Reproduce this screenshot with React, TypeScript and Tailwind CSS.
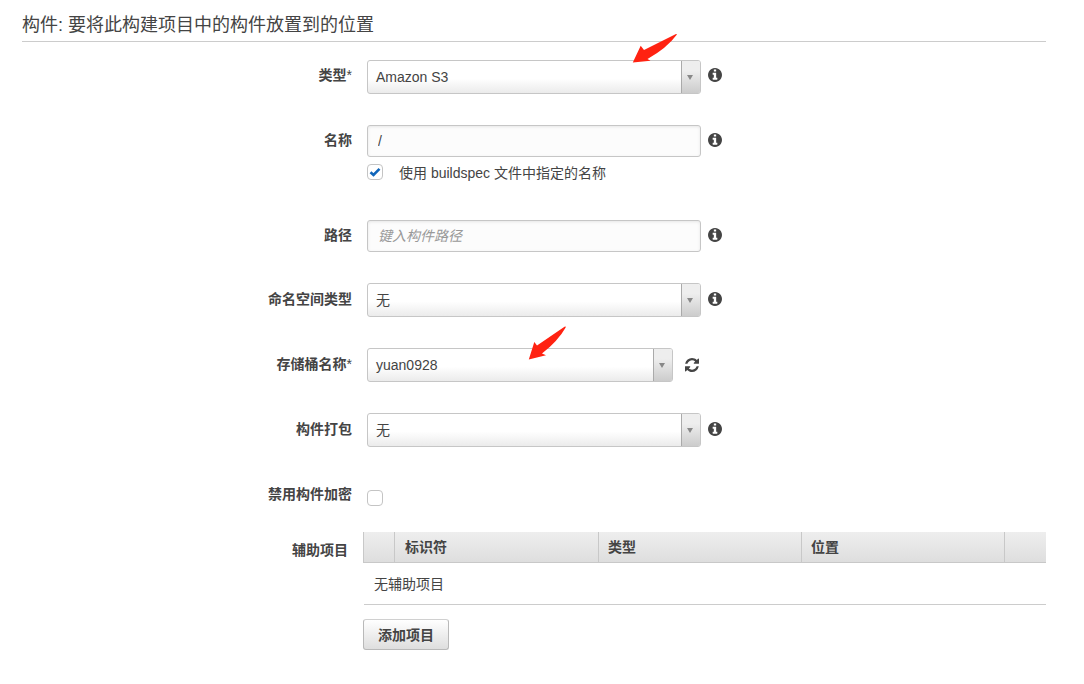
import type { ReactNode } from "react";

function InfoIcon({ className = "mt-2" }: { className?: string }) {
  return (
    <svg viewBox="0 128 1536 1536" className={"ml-[7px] h-3.5 w-3.5 shrink-0 fill-[#444] " + className}>
      <path d="M1024 1376v-160q0-14-9-23t-23-9h-96v-512q0-14-9-23t-23-9h-320q-14 0-23 9t-9 23v160q0 14 9 23t23 9h96v320h-96q-14 0-23 9t-9 23v160q0 14 9 23t23 9h448q14 0 23-9t9-23zm-128-896v-160q0-14-9-23t-23-9h-192q-14 0-23 9t-9 23v160q0 14 9 23t23 9h192q14 0 23-9t9-23zm640 416q0 209-103 385.500t-279.500 279.500-385.500 103-385.500-103-279.500-279.500-103-385.500 103-385.500 279.500-279.500 385.500-103 385.500 103 279.500 279.500 103 385.500z" />
    </svg>
  );
}

function RefreshIcon() {
  return (
    <svg viewBox="128 128 1536 1536" className="ml-3 mt-2.5 h-3.5 w-3.5 shrink-0 fill-[#444]">
      <path d="M1639 1056q0 5-1 7-64 268-268 434.500t-478 166.500q-146 0-282.500-55t-243.500-157l-129 129q-19 19-45 19t-45-19-19-45v-448q0-26 19-45t45-19h448q26 0 45 19t19 45-19 45l-137 137q71 66 161 102t187 36q134 0 250-65t186-179q11-17 53-117 8-23 30-23h192q13 0 22.500 9.500t9.500 22.500zm25-800v448q0 26-19 45t-45 19h-448q-26 0-45-19t-19-45 19-45l138-138q-148-137-349-137-134 0-250 65t-186 179q-11 17-53 117-8 23-30 23h-199q-13 0-22.500-9.500t-9.500-22.500v-7q65-268 270-434.500t480-166.500q146 0 284 55.500t245 156.500l130-129q19-19 45-19t45 19 19 45z" />
    </svg>
  );
}

function Pointer({ path, className }: { path: string; className: string }) {
  return (
    <svg viewBox="0 0 46 36" className={"absolute h-9 w-[46px] fill-[#ff2211] " + className}>
      <path d={path} />
    </svg>
  );
}

type RowProps = { label: string; required?: boolean; className: string; labelClass?: string; children: ReactNode };

function Row({ label, required = false, className, labelClass = "mt-[5px]", children }: RowProps) {
  return (
    <div className={"flex items-start " + className}>
      <div className={"mr-[15px] w-[330px] text-right font-bold leading-5 " + labelClass}>
        {label}
        {required && <span className="font-normal">*</span>}
      </div>
      {children}
    </div>
  );
}

function Select({ value, width = "w-[334px]", children }: { value: string; width?: string; children?: ReactNode }) {
  return (
    <div className={"relative flex h-[34px] rounded-[3px] border border-[#c6c6c6] bg-linear-to-b from-white from-55% to-[#ebebeb] " + width}>
      <span className="flex-1 pl-2 leading-[33px]">{value}</span>
      <span className="flex w-[19px] items-center justify-center rounded-r-[2px] border-l border-[#aaa] bg-linear-to-b from-[#eee] from-30% to-[#ccc] pr-0.5">
        <svg viewBox="0 0 6 5" className="h-[5px] w-1.5 fill-[#888]">
          <path d="M0 0H6L3 5Z" />
        </svg>
      </span>
      {children}
    </div>
  );
}

function TextField({ value, placeholder }: { value?: string; placeholder?: string }) {
  return (
    <input
      defaultValue={value}
      placeholder={placeholder}
      className="block h-8 w-[334px] rounded-[3px] border border-[#c6c6c6] bg-[#fcfcfc] px-2.5 text-sm shadow-[inset_0_1px_3px_#e6e6e6] outline-none placeholder:italic placeholder:text-[#999] placeholder:opacity-100"
    />
  );
}

function Checkbox({ checked = false }: { checked?: boolean }) {
  return (
    <span className="flex h-4 w-4 shrink-0 items-center justify-center rounded-[4px] border border-[#c4c4c4] bg-white">
      {checked && (
        <svg viewBox="0 0 12 10" className="h-2.5 w-3 fill-none stroke-[#1166bb] stroke-[2.600]">
          <path d="M1.500 5.200 L4.500 8 L10.500 1.800" />
        </svg>
      )}
    </span>
  );
}

export default function App() {
  return (
    <main className="h-[684px] w-[1084px] bg-white pl-[22px] pr-[38px] font-['Liberation_Sans','Noto_Sans_CJK_SC',sans-serif] text-sm text-[#444]">
      <h2 className="h-[42px] border-b border-[#ccc] pt-[13px] text-lg leading-6">构件: 要将此构建项目中的构件放置到的位置</h2>

      <Row label="类型" required className="mt-[18px] h-[65px]">
        <Select value="Amazon S3">
          <Pointer
            className="-top-[29px] left-[264px]"
            path="M0.800 30.500 L8.700 13.700 L12 18 L44 2 Q45.500 1.700 44.500 3 Q35 16 15.500 27 L18.500 28.700 Z"
          />
        </Select>
        <InfoIcon />
      </Row>
      <Row label="名称" className="h-[95px]">
        <div>
          <TextField value="/" />
          <div className="mt-[7px] flex">
            <Checkbox checked />
            <span className="ml-4 leading-[18px]">使用 buildspec 文件中指定的名称</span>
          </div>
        </div>
        <InfoIcon />
      </Row>
      <Row label="路径" className="h-[63px]">
        <TextField placeholder="键入构件路径" />
        <InfoIcon />
      </Row>
      <Row label="命名空间类型" className="h-[65px]" labelClass="mt-1.5">
        <Select value="无" />
        <InfoIcon className="mt-[9px]" />
      </Row>
      <Row label="存储桶名称" required className="h-[65px]" labelClass="mt-1.5">
        <Select value="yuan0928" width="w-[306px]">
          <Pointer
            className="-top-[24px] left-[160px]"
            path="M0.800 34.500 L6.300 17 L9 20.500 L36.500 1.700 Q38.500 1.200 37.500 2.700 Q30 16 14 28.500 L18 30.200 Z"
          />
        </Select>
        <RefreshIcon />
      </Row>
      <Row label="构件打包" className="h-[65px]" labelClass="mt-1.5">
        <Select value="无" />
        <InfoIcon className="mt-[9px]" />
      </Row>
      <Row label="禁用构件加密" className="h-[54px]" labelClass="mt-1.5">
        <div className="pt-3">
          <Checkbox />
        </div>
      </Row>

      <div className="flex items-start">
        <div className="mr-[15px] mt-2 w-[326px] text-right font-bold leading-5">辅助项目</div>
        <div className="flex-1">
          <div className="grid h-[31px] grid-cols-[31px_204px_203px_203px_1fr] border-b border-[#c8c8c8] bg-linear-to-b from-[#eee] to-[#dedede] font-bold leading-[30px]">
            <span className="border-l border-[#c8c8c8]" />
            <span className="border-l border-[#c8c8c8] pl-2.5">标识符</span>
            <span className="border-l border-[#c8c8c8] pl-[9px]">类型</span>
            <span className="border-l border-[#c8c8c8] pl-[9px]">位置</span>
            <span className="border-l border-[#c8c8c8]" />
          </div>
          <div className="ml-px h-[42px] border-b border-[#ccc] pl-2.5 leading-[42px]">无辅助项目</div>
          <button className="mt-3.5 h-[31px] w-[86px] rounded-[3px] border border-[#b9b9b9] border-t-[#d0d0d0] bg-linear-to-b from-white to-[#dedede] font-bold leading-[30px]">
            添加项目
          </button>
        </div>
      </div>
    </main>
  );
}
